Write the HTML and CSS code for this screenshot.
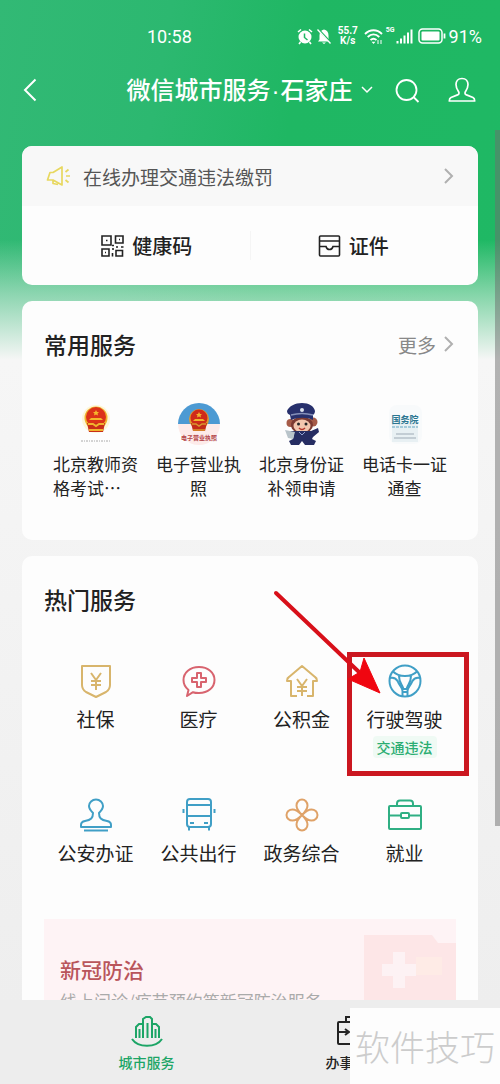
FILE: index.html
```html
<!DOCTYPE html>
<html lang="zh-CN">
<head>
    <meta charset="UTF-8">
    <meta name="viewport" content="width=device-width, initial-scale=1.0">
    <title>微信城市服务</title>
    <link rel="stylesheet" href="styles.css">
</head>
<body>
    <div class="app">
        <div class="status-bar">
            <span class="time">10:58</span>
            <div class="status-icons">
                <svg width="16" height="17" viewBox="0 0 16 17">
                    <circle cx="8" cy="9" r="6.5" fill="#fff"/>
                    <path d="M1 4l3-2.5M15 4l-3-2.5M3.5 14l-1.5 2M12.500 14l1.500 2" stroke="#fff" stroke-width="1.600"/>
                    <path d="M7.500 5.500v4l3 2.500" fill="none" stroke="#1fb763" stroke-width="1.500"/>
                </svg>
                <svg width="16" height="17" viewBox="0 0 16 17">
                    <path d="M8 1.500c3 .5 4.500 3 4.500 6v4l1.500 2H2l1.500-2v-4c0-3 1.500-5.500 4.500-6zM6 14.500h4L8 16z" fill="#fff"/>
                    <path d="M2 1l13 14" stroke="#1fb763" stroke-width="2"/>
                    <path d="M1.500 1.500l13 14" stroke="#fff" stroke-width="1.300"/>
                </svg>
                <span class="speed">55.7<br>K/s</span>
                <svg width="19" height="17" viewBox="0 0 19 17" fill="none" stroke="#fff" stroke-width="1.900">
                    <path d="M1 6c5-5 12-5 17 0M3.700 9c3.500-3.300 8-3.300 11.600 0M6.500 12c2-1.700 4-1.700 6 0"/>
                    <path d="M9.500 16l-2-2.300h4z" fill="#fff" stroke="none"/>
                    <path d="M14 12v4M17 12v4" stroke-width="1"/>
                </svg>
                <span class="net">5G</span>
                <svg class="signal" width="17" height="16" viewBox="0 0 17 16" stroke="#fff" stroke-width="2">
                    <path d="M1.500 15.500v-2.500M5 15.500v-5M8.500 15.500v-8M12 15.500v-11M15.500 15.500v-14"/>
                </svg>
                <svg class="battery" width="28" height="16" viewBox="0 0 28 16">
                    <rect x="1" y="1" width="23" height="14" rx="3.500" fill="none" stroke="#fff" stroke-width="1.500"/>
                    <rect x="3.500" y="3.500" width="18" height="9" rx="1" fill="#fff"/>
                    <path d="M26.500 5.500v5" stroke="#fff" stroke-width="1.800"/>
                </svg>
                <span class="percent">91%</span>
            </div>
        </div>

        <header class="header">
            <button class="icon-btn back" aria-label="返回">
                <svg width="14" height="24" viewBox="0 0 14 24" fill="none" stroke="#fff" stroke-width="2"><path d="M12.500 1.500L2 12l10.500 10.500"/></svg>
            </button>
            <button class="city">
                <span>微信城市服务<i>·</i>石家庄</span>
                <svg width="12" height="8" viewBox="0 0 12 8" fill="none" stroke="#fff" stroke-width="1.500"><path d="M1 1l5 5 5-5"/></svg>
            </button>
            <div class="header-right">
                <button class="icon-btn" aria-label="搜索">
                    <svg width="25" height="25" viewBox="0 0 25 25" fill="none" stroke="#fff" stroke-width="1.800"><circle cx="11.500" cy="12" r="10"/><path d="M18.500 19l5 5"/></svg>
                </button>
                <button class="icon-btn" aria-label="我的">
                    <svg width="28" height="26" viewBox="0 0 28 26" fill="none" stroke="#fff" stroke-width="1.700" stroke-linejoin="round"><path d="M14 1.500c-4 0-6 2.700-6 6 0 3.500 1.500 5.500 2.500 7 1 1.800.5 2.700-1 3.400L3 20.500c-1.200.6-1.700 1.500-1.700 3.500h25.400c0-2-.5-2.900-1.700-3.500l-6.500-2.600c-1.500-.7-2-1.600-1-3.400 1-1.500 2.500-3.500 2.500-7 0-3.300-2-6-6-6z"/></svg>
                </button>
            </div>
        </header>

        <main class="content">
            <section class="card">
                <a class="notice" href="#">
                    <svg width="25" height="22" viewBox="0 0 25 22" fill="none" stroke="#e8d860" stroke-width="1.700" stroke-linejoin="round"><path d="M16 2v18L7 15H1.500L4 7.500h3zM7 15v3.500l5 1M19.500 7l3-2.500M20 11h4M19.500 15l3 2.500"/></svg>
                    <span>在线办理交通违法缴罚</span>
                    <svg class="arrow" width="10" height="16" viewBox="0 0 10 16"><path d="M1 1l7 7-7 7"/></svg>
                </a>
                <div class="actions">
                    <a href="#">
                        <svg width="23" height="22" viewBox="0 0 23 22" fill="none" stroke="#222" stroke-width="1.600"><path d="M1 1h9v9H1zM14.500 1H22v7h-7.500zM1 14h7v7H1zM15 15.500h6.500V21H15zM12 13v2M15 12h2M20 12h2.500M11.500 18v3.500M5 5.500h1.500M18 4.500h1M4 17.500h1M11 10.500h2"/></svg>
                        <span>健康码</span>
                    </a>
                    <a href="#">
                        <svg width="23" height="22" viewBox="0 0 23 22" fill="none" stroke="#222" stroke-width="1.600"><rect x="1.500" y="1" width="20" height="20" rx="1"/><path d="M1.500 6h20M1.500 11.500H8c.5 2 1.500 3 3.500 3s3-1 3.500-3h6.500"/></svg>
                        <span>证件</span>
                    </a>
                </div>
            </section>

            <section class="card common">
                <div class="card-head">
                    <h2>常用服务</h2>
                    <a class="more" href="#">更多
                        <svg class="arrow" width="10" height="16" viewBox="0 0 10 16"><path d="M1 1l7 7-7 7"/></svg>
                    </a>
                </div>
                <div class="grid">
                    <a class="item" href="#">
                        <svg width="42" height="42" viewBox="0 0 42 42">
                            <circle cx="21" cy="16" r="14" fill="#fdf6d8"/>
                            <circle cx="21" cy="15" r="11.500" fill="#f0b32d"/>
                            <circle cx="21" cy="14" r="10" fill="#dc3219"/>
                            <path d="M21 7l1 2h2l-1.500 1.500.5 2-2-1-2 1 .5-2L18 9h2zM14 17l2-2h10l2 2z" fill="#f6b72c"/>
                            <path d="M12 20h18l-2 9H14z" fill="#c92d18"/>
                            <path d="M13 21h5l3 2 3-2h5M14 27h14" fill="none" stroke="#f0b32d" stroke-width="2"/>
                            <path d="M6 38h30" stroke="#aaa" stroke-width="1" stroke-dasharray="2 1 1 1"/>
                        </svg>
                        <span class="label left">北京教师资格考试…</span>
                    </a>
                    <a class="item" href="#">
                        <svg width="42" height="42" viewBox="0 0 42 42">
                            <path d="M0 21a21 21 0 0 0 42 0z" fill="#fdebe9"/>
                            <path d="M0 21a21 21 0 0 1 42 0z" fill="#4c9ad3"/>
                            <circle cx="21" cy="16" r="10" fill="#e09a2c"/>
                            <circle cx="21" cy="15" r="8.500" fill="#cf2b1a"/>
                            <path d="M21 9l1 2h2l-1.500 1.500.5 2-2-1-2 1 .5-2L18 11h2zM15 18l2-2h8l2 2z" fill="#f0b32d"/>
                            <path d="M13 20h16l-2 8H15z" fill="#c42c1a"/>
                            <path d="M14 21h4l3 2 3-2h4M15 27h12" fill="none" stroke="#d9982d" stroke-width="1.500"/>
                            <text class="stamp" x="21" y="37" text-anchor="middle">电子营业执照</text>
                        </svg>
                        <span class="label">电子营业执照</span>
                    </a>
                    <a class="item" href="#">
                        <svg width="42" height="42" viewBox="0 0 42 42">
                            <circle cx="9.500" cy="20" r="4" fill="#a65b48"/><circle cx="32" cy="19" r="4.500" fill="#a65b48"/>
                            <ellipse cx="21" cy="22" rx="11" ry="8.500" fill="#7c3b32"/>
                            <ellipse cx="21" cy="23" rx="8.500" ry="6.500" fill="#f3c7ae"/>
                            <path d="M6 8c2-5 8-8 15-8s12 3 13 8c0 2-1 3-2 4v5c-6-3-15-3-22 0l-1-5C7 11 6 10 6 8z" fill="#27306c"/>
                            <path d="M10 12c7-2 15-2 22 0" stroke="#8590b9" stroke-width="1.500" fill="none"/>
                            <circle cx="21" cy="7" r="2" fill="#dbe2ed"/>
                            <circle cx="17.500" cy="21" r="1.500" fill="#252525"/><circle cx="25" cy="21" r="1.500" fill="#252525"/>
                            <path d="M18 25q3 3 6 0" stroke="#b4372b" stroke-width="1.500" fill="none"/>
                            <path d="M10 28h20l7-3 1 4-6 5-1 2 4 2-2 4h-9l-3-4-3 4h-8l-2-4 4-2 1-4-5-3z" fill="#262d62"/>
                            <path d="M4 27l5 1 5 1-2 7-5-1z" fill="#b9c4ca"/>
                            <path d="M18 29l3 3 3-3" fill="none" stroke="#8fa0cf"/>
                        </svg>
                        <span class="label">北京身份证补领申请</span>
                    </a>
                    <a class="item" href="#">
                        <svg width="42" height="42" viewBox="0 0 42 42">
                            <rect x="5" y="2" width="33" height="39" rx="8" fill="#f8fafb"/>
                            <rect x="8" y="19" width="26" height="20" fill="#e8f0f3"/>
                            <text class="council" x="21" y="20" text-anchor="middle">国务院</text>
                            <path d="M8 24h26" stroke="#a5cbda" stroke-width="2" stroke-dasharray="3 1"/>
                            <path d="M12 31h18M10 35h22" stroke="#c3cdd4" stroke-width="2"/>
                        </svg>
                        <span class="label">电话卡一证通查</span>
                    </a>
                </div>
            </section>

            <section class="card hot">
                <div class="card-head">
                    <h2>热门服务</h2>
                </div>
                <div class="grid">
                    <a class="item" href="#">
                        <svg class="gold" width="36" height="36" viewBox="0 0 36 36"><path d="M4 3h28v19c0 3-1 5-4 7l-10 5-10-5c-3-2-4-4-4-7zM13 10l5 7 5-7M18 17v10M13 18h10M13 22h10"/></svg>
                        <span class="label">社保</span>
                    </a>
                    <a class="item" href="#">
                        <svg class="red" width="36" height="36" viewBox="0 0 36 36"><path d="M18 4c9 0 15.500 5.500 15.500 13S27 30 18 30c-2 0-4 0-6-.8L6 33l1.500-6c-3-2.500-5-6-5-10C2.500 9.500 9 4 18 4z"/><path d="M16 10h4v5h5v4h-5v5h-4v-5h-5v-4h5z"/></svg>
                        <span class="label">医疗</span>
                    </a>
                    <a class="item" href="#">
                        <svg class="gold" width="36" height="36" viewBox="0 0 36 36"><path d="M13 33H7V18H3c0-2 0-3 2-4L18 3l13 11c2 1 2 2 2 4h-4v15h-6M13 16l5 7 5-7M18 23v10M13 24h10M13 28h10"/></svg>
                        <span class="label">公积金</span>
                    </a>
                    <a class="item marked" href="#">
                        <svg class="blue" width="36" height="36" viewBox="0 0 36 36"><circle cx="18" cy="18" r="15.500"/><path d="M6 8.500c6 6 18 6 24 0M2.500 15c4-1 6.500 0 8 3 2 5 5 6 5 10v5.500M33.500 15c-4-1-6.500 0-8 3-2 5-5 6-5 10v5.500M12 13c0 7 3 8 4.500 13h3C21 21 24 20 24 13M15.500 29h5"/></svg>
                        <span class="label">行驶驾驶</span>
                        <span class="tag">交通违法</span>
                        <span class="mark-box"></span>
                        <svg class="mark-arrow" width="110" height="106" viewBox="0 0 110 106"><path d="M4 4l83 79" stroke="#d8101a" stroke-width="4" stroke-linecap="round"/><path d="M108 104L76 90l12-7 4-14z" fill="#f00610" stroke="#f00610" stroke-width="1"/></svg>
                    </a>
                    <a class="item" href="#">
                        <svg class="blue" width="36" height="36" viewBox="0 0 36 36"><path d="M15 16c-3-3-4-5-4-7a7 6.500 0 0 1 14 0c0 2-1 4-4 7 0 5 2 7 8 8 3 .5 4 1.500 4 4v2H3v-2c0-2.500 1-3.500 4-4 6-1 8-3 8-8z"/><path d="M6 33.500h24"/></svg>
                        <span class="label">公安办证</span>
                    </a>
                    <a class="item" href="#">
                        <svg class="blue" width="36" height="36" viewBox="0 0 36 36"><rect x="6" y="2" width="24" height="28" rx="3"/><path d="M6 8h24M6 19h24M9 26h4M23 26h4M8 30v3.500M28 30v3.500M2.500 12v4M33.500 12v4"/></svg>
                        <span class="label">公共出行</span>
                    </a>
                    <a class="item" href="#">
                        <svg class="orange" width="36" height="36" viewBox="0 0 36 36"><path d="M18 18c-3-3-5.500-6-5.500-9.500a5.500 6 0 0 1 11 0C23.500 12 21 15 18 18zM18 18c3-3 6-5.500 9.500-5.500a6 5.500 0 0 1 0 11C24 23.500 21 21 18 18zM18 18c3 3 5.500 6 5.500 9.500a5.500 6 0 0 1-11 0C12.500 24 15 21 18 18zM18 18c-3 3-6 5.500-9.500 5.500a6 5.500 0 0 1 0-11C12 12.500 15 15 18 18z"/></svg>
                        <span class="label">政务综合</span>
                    </a>
                    <a class="item" href="#">
                        <svg class="green" width="36" height="36" viewBox="0 0 36 36"><rect x="2" y="9" width="32" height="23" rx="1"/><path d="M10 9V6.500c0-2 1-3 3-3h10c2 0 3 1 3 3V9M2 18.500h12M22 18.500h12"/><rect x="14" y="16" width="8" height="5" rx="1"/></svg>
                        <span class="label">就业</span>
                    </a>
                </div>
                <a class="banner" href="#">
                    <h3>新冠防治</h3>
                    <p>线上问诊/疫苗预约等新冠防治服务</p>
                    <svg width="92" height="66" viewBox="0 0 92 66"><path d="M0 0h68l6 8h18v58H0z" fill="#fde6e7"/><path d="M52 22h26v18H52z" fill="#feebe6"/><path d="M29 17h12v12h11v12H41v12H29V41H18V29h11z" fill="#fdf2f4"/></svg>
                </a>
            </section>
        </main>

        <nav class="tab-bar">
            <a class="tab active" href="#">
                <svg width="34" height="34" viewBox="0 0 34 34" fill="none" stroke="#1ca566" stroke-width="2"><path d="M6 24V13l3-3h4v14M13 10V5l3-2h4l2 2v19M22 10h4l3 3v11M17.500 24V9M9.500 24v-9M25.500 24v-9M2 25c6 9 24 9 30 0"/></svg>
                <span>城市服务</span>
            </a>
            <a class="tab" href="#">
                <svg width="34" height="34" viewBox="0 0 34 34" fill="none" stroke="#222" stroke-width="2"><rect x="1" y="8" width="32" height="22" rx="1"/><path d="M9 8V3h16v5M1 18h10M8 15l4 3-4 3M23 18h10"/></svg>
                <span>办事</span>
            </a>
        </nav>
        <div class="scroll-thumb"></div>
        <div class="watermark">软件技巧</div>
    </div>
</body>
</html>
```
FILE: styles.css
```css
* {
    box-sizing: border-box;
}

body {
    margin: 0;
    font-family: "Noto Sans CJK SC", sans-serif;
    color: #222;
}

h2, h3, p {
    margin: 0;
}

a {
    color: inherit;
    text-decoration: none;
}

svg {
    display: block;
    flex: none;
}

button {
    padding: 0;
    border: none;
    background: none;
    color: inherit;
    font-family: inherit;
    cursor: pointer;
}

.app {
    position: relative;
    display: flex;
    flex-direction: column;
    height: 100vh;
    overflow: hidden;
    background:
        linear-gradient(to bottom, transparent 240px, rgba(246, 246, 246, 0.45) 292px, #f6f6f6 360px, #ededed 100%),
        linear-gradient(100deg, #32b975 0%, #2cb870 25%, #1fb763 45%, #1fb965 100%);
}

/* status bar */
.status-bar {
    display: flex;
    justify-content: space-between;
    align-items: center;
    height: 56px;
    padding: 16px 18px 0 147px;
    color: #fff;
    font-family: Roboto, sans-serif;
    font-size: 18px;
}

.status-icons {
    display: flex;
    align-items: center;
    gap: 3px;
}

.speed {
    font-size: 10px;
    line-height: 10px;
    font-weight: bold;
    text-align: center;
    margin: 0 3px;
}

.net {
    font-size: 7px;
    font-weight: bold;
    align-self: flex-start;
}

.signal {
    margin-left: -2px;
}

.battery {
    margin-left: 2px;
}

/* header */
.header {
    display: grid;
    grid-template-columns: 1fr auto 1fr;
    align-items: center;
    height: 68px;
    padding: 0 24px 0 23px;
    color: #fff;
}

.back {
    justify-self: start;
}

.city {
    display: flex;
    align-items: center;
    gap: 8px;
    font-size: 24px;
    line-height: 36px;
    font-weight: 500;
}

.city i {
    display: inline-block;
    width: 10px;
    text-align: center;
    font-style: normal;
    font-family: "Liberation Sans", sans-serif;
}

.header-right {
    display: flex;
    justify-content: flex-end;
    align-items: center;
    gap: 28px;
}

/* cards */
.content {
    flex: 1;
    min-height: 0;
    display: flex;
    flex-direction: column;
    gap: 16px;
    padding: 22px 22px 0;
    overflow: hidden;
}

.card {
    flex: none;
    background: #fdfdfd;
    border-radius: 10px;
    overflow: hidden;
}

.notice {
    display: flex;
    align-items: center;
    gap: 12px;
    height: 60px;
    padding: 0 24px;
    background: #f8f8f8;
    color: #555;
    font-size: 19px;
}

.arrow {
    fill: none;
    stroke: #b0b0b0;
    stroke-width: 2;
}

.notice .arrow {
    margin-left: auto;
}

.actions {
    display: flex;
    align-items: center;
    height: 79px;
    padding: 0 22px;
}

.actions a {
    flex: 1;
    display: flex;
    justify-content: center;
    align-items: center;
    gap: 8px;
    font-size: 20px;
    font-weight: 500;
}

.actions a + a {
    border-left: 1px solid #f5f5f5;
}

.card-head {
    display: flex;
    justify-content: space-between;
    align-items: center;
    height: 86px;
    padding: 0 24px 0 22px;
}

.card-head h2 {
    font-size: 23px;
    font-weight: 500;
}

.more {
    display: flex;
    align-items: center;
    gap: 8px;
    color: #888;
    font-size: 19px;
}

.grid {
    display: grid;
    grid-template-columns: repeat(4, 1fr);
    padding: 16px 22px 40px;
}

.item {
    position: relative;
    display: flex;
    flex-direction: column;
    align-items: center;
}

.label {
    width: 85px;
    margin-top: 7px;
    font-size: 17px;
    line-height: 24px;
    text-align: center;
}

.label.left {
    text-align: left;
}

.stamp {
    font-size: 6px;
    font-weight: bold;
    fill: #b4474a;
}

.council {
    font-size: 9px;
    font-weight: bold;
    fill: #2d7792;
}

/* hot services */
.hot {
    border-radius: 10px 10px 0 0;
}

.hot .grid {
    row-gap: 39px;
    padding: 21px 22px 53px;
}

.hot .label {
    font-size: 19px;
    line-height: 26px;
}

.hot .item > svg {
    fill: none;
    stroke-width: 2;
    stroke-linejoin: round;
}

.hot .gold {
    stroke: #d8b56c;
}

.hot .red {
    stroke: #d8646f;
}

.hot .blue {
    stroke: #409fc6;
}

.hot .orange {
    stroke: #dfa268;
}

.hot .green {
    stroke: #2faf83;
}

.tag {
    margin-top: 4px;
    padding: 0 4px;
    border-radius: 4px;
    background: #effaf4;
    color: #2bad72;
    font-size: 14px;
    line-height: 22px;
    font-weight: 500;
}

.mark-box {
    position: absolute;
    top: -11px;
    left: -6px;
    right: -13px;
    bottom: -18px;
    border: 5px solid #cb1720;
}

.mark-arrow {
    position: absolute;
    top: -74px;
    left: -81px;
}

.banner {
    position: relative;
    display: block;
    margin: 0 22px;
    padding: 36px 16px 30px;
    background: #fef3f5;
}

.banner h3 {
    color: #b9555b;
    font-size: 21px;
    line-height: 28px;
    font-weight: 500;
}

.banner p {
    margin-top: 6px;
    color: #aaa;
    font-size: 17px;
    line-height: 24px;
}

.banner svg {
    position: absolute;
    top: 16px;
    right: 0;
}

/* bottom tabs */
.tab-bar {
    display: flex;
    height: 84px;
    padding: 0 43px;
    background: #ededed;
}

.tab {
    flex: 1;
    display: flex;
    flex-direction: column;
    align-items: center;
    padding-top: 14px;
    font-size: 14px;
    line-height: 28px;
    font-weight: 500;
}

.tab span {
    width: 56px;
}

.tab.active {
    color: #1ca566;
}

.scroll-thumb {
    position: absolute;
    top: 130px;
    right: 0;
    width: 5px;
    height: 696px;
    background: rgba(110, 110, 110, 0.5);
}

.watermark {
    position: absolute;
    right: 0;
    bottom: 0;
    width: 150px;
    height: 76px;
    background: #fdfdfd;
    color: #ccc;
    font-size: 35px;
    font-weight: 300;
    line-height: 76px;
    text-align: center;
}
```
